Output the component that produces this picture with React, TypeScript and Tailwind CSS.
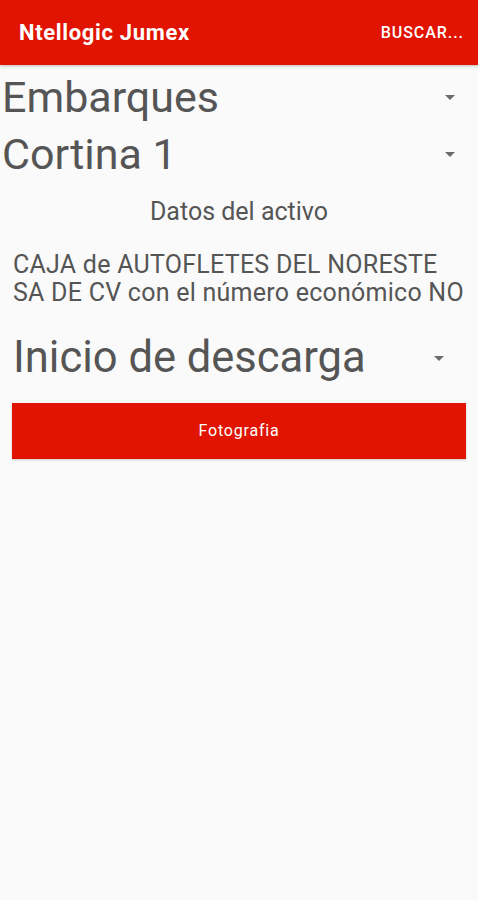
import React from "react";

function Arrow({ className }: { className?: string }) {
  return (
    <svg width="10" height="5" viewBox="0 0 10 5" className={className}>
      <path d="M0 0 L10 0 L5 5 Z" fill="#6b6b6b" />
    </svg>
  );
}

export default function App() {
  return (
    <div className="min-h-[900px] bg-[#fafafa] font-['Roboto',sans-serif]">
      <div className="h-[65px] bg-[#e01400] flex items-center justify-between pl-[19px] pr-[14px] shadow-[0_1px_3px_rgba(0,0,0,0.25)]">
        <span className="text-white font-bold text-[22px] tracking-[0.03em]">Ntellogic Jumex</span>
        <span className="text-white font-medium text-[16px] tracking-[0.06em]">BUSCAR...</span>
      </div>

      <div className="flex flex-col">
        <div className="h-[57px] flex items-center justify-between pl-[2px] pr-[23px] mt-[4px]">
          <span className="text-[43px] text-[#555]">Embarques</span>
          <Arrow />
        </div>
        <div className="h-[57px] flex items-center justify-between pl-[2px] pr-[23px]">
          <span className="text-[43px] text-[#555]">Cortina 1</span>
          <Arrow />
        </div>

        <p className="text-center text-[25px] leading-[30px] text-[#555] mt-[14px]">Datos del activo</p>

        <p className="px-[13px] mt-[24px] text-[25px] leading-[28px] tracking-[0.01em] text-[#555]">
          CAJA de AUTOFLETES DEL NORESTE
          <br />
          SA DE CV con el número económico NO
        </p>

        <div className="h-[58px] flex items-center justify-between pl-[13px] pr-[34px] mt-[22px]">
          <span className="text-[43.5px] text-[#555]">Inicio de descarga</span>
          <Arrow />
        </div>

        <div className="px-[12px] mt-[16px]">
          <button className="w-full h-[56px] bg-[#e01400] text-white text-[16px] tracking-[0.05em] shadow-[0_1px_2px_rgba(0,0,0,0.2)]">
            Fotografia
          </button>
        </div>
      </div>
    </div>
  );
}
